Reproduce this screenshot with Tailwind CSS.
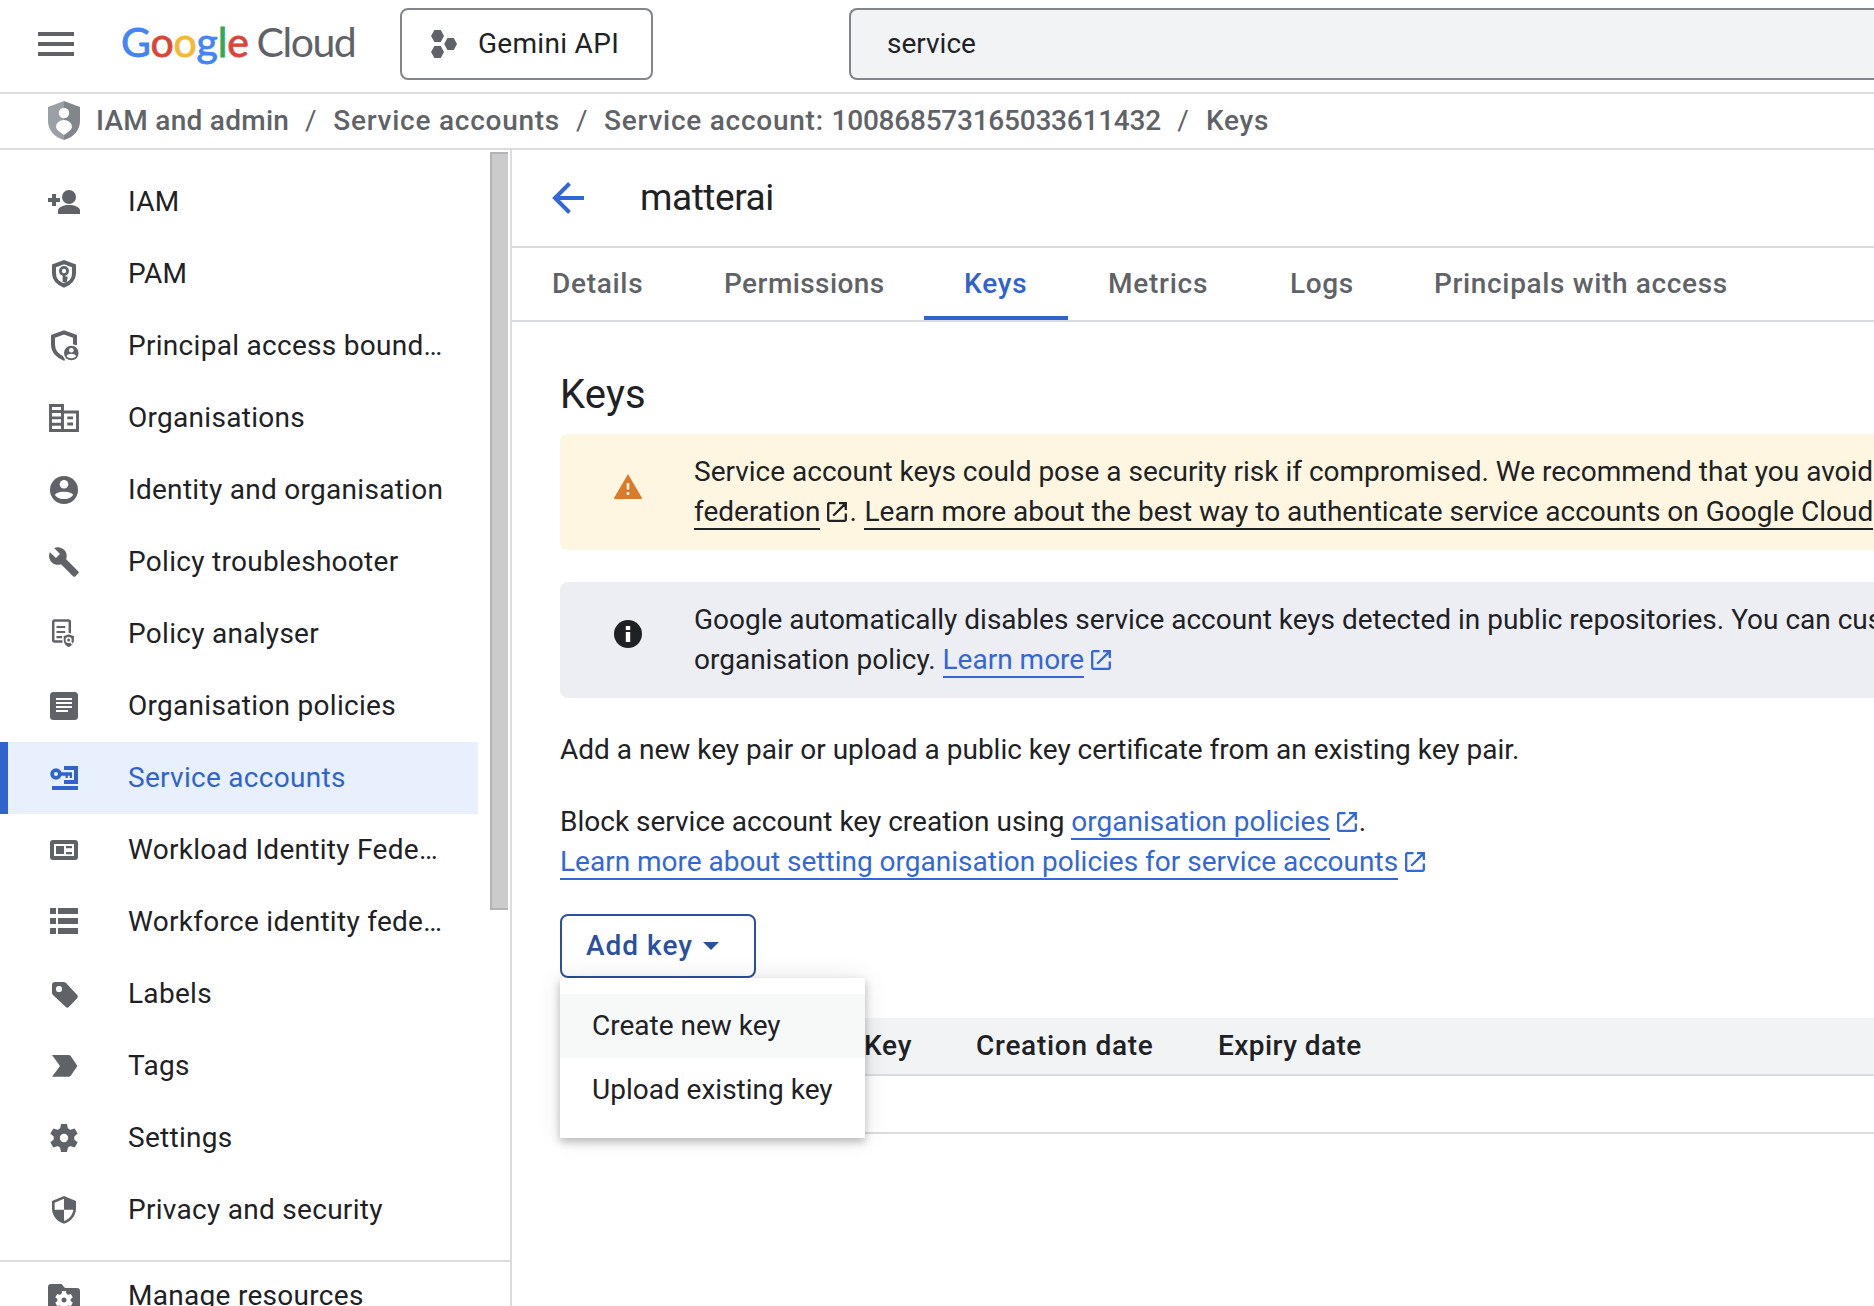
<!DOCTYPE html>
<html lang="en-GB">
<head>
<meta charset="utf-8">
<title>Keys – Service accounts – Google Cloud</title>
<script src="https://cdn.jsdelivr.net/npm/@tailwindcss/browser@4"></script>
</head>
<body class="w-[1874px] h-[1306px] overflow-hidden bg-white font-['Roboto',sans-serif] text-[28px] leading-10 text-[#202124]">
<svg class="hidden">
  <symbol id="ext" viewBox="0 0 20 20"><path d="M8.5 1.2H2.2a1 1 0 0 0-1 1v15.6a1 1 0 0 0 1 1h15.6a1 1 0 0 0 1-1V11.5M12 1.2h6.8V8M18.4 1.6L6.2 13.8" fill="none" stroke="currentColor" stroke-width="2.3"/></symbol>
</svg>
<div class="flex h-full flex-col">
  <header class="flex h-[94px] shrink-0 border-b-2 border-[#dadce0] pt-2">
    <button class="ml-[38px] mt-6 flex h-6 w-9 flex-col justify-between">
      <span class="h-1 w-full bg-[#5f6368]"></span><span class="h-1 w-full bg-[#5f6368]"></span><span class="h-1 w-full bg-[#5f6368]"></span>
    </button>
    <div class="ml-[47px] mt-[7px] flex h-[54px] w-[279px] items-center gap-2 whitespace-nowrap text-[41px] leading-[54px] font-['Lato',sans-serif]">
      <span class="tracking-[-0.2px] [-webkit-text-stroke:0.8px]"><span class="text-[#4285f4]">G</span><span class="text-[#db4437]">o</span><span class="text-[#f4b932]">o</span><span class="text-[#4285f4]">g</span><span class="text-[#34a853]">l</span><span class="text-[#db4437]">e</span></span>
      <span class="tracking-[-1.5px] text-[#5f6368]">Cloud</span>
    </div>
    <button class="flex h-[72px] w-[253px] items-center rounded-lg border-2 border-[#80868b] pl-[29px]">
      <svg class="h-7 w-[26px]" viewBox="0 0 26 28" fill="#5f6368"><path d="M3.4 0h6.4l3.2 6-3.2 6H3.4L0 6zM3.4 16h6.4l3.2 6-3.2 6H3.4L0 22zM16.4 8h6.4l3.2 6-3.2 6h-6.4L13.200 14z"/></svg>
      <span class="ml-[21px] tracking-[0.3px]">Gemini API</span>
    </button>
    <div class="ml-[196px] flex h-[72px] flex-1 items-center rounded-l-lg border-2 border-r-0 border-[#80868b] bg-[#f1f3f4] pl-9">service</div>
  </header>

  <nav class="flex h-14 shrink-0 items-center border-b-2 border-[#dadce0] pl-12 font-medium tracking-[0.75px] whitespace-nowrap text-[#5f6368]">
    <svg class="mb-px h-[39px] w-8" viewBox="0 0 32 39"><path d="M16 0L0 6v14c0 9 6.500 16.500 16 19z" fill="#9aa0a6"/><path d="M16 0l16 6v14c0 9-6.500 16.500-16 19z" fill="#80868b"/><circle cx="16" cy="12" r="5.200" fill="#fff"/><path d="M16 34c-2-2-8-4.500-8-8.500a8 6.500 0 0 1 16 0c0 4-6 6.500-8 8.500z" fill="#fff"/></svg>
    <span class="ml-4 tracking-[0.28px]">IAM and admin</span>
    <span class="w-11 text-center font-normal">/</span>
    <span>Service accounts</span>
    <span class="w-11 text-center font-normal">/</span>
    <span>Service account: <span class="tracking-[-0.23px]">100868573165033611432</span></span>
    <span class="w-[45px] text-center font-normal">/</span>
    <span>Keys</span>
  </nav>

  <div class="flex min-h-0 flex-1">
    <aside class="relative w-[512px] shrink-0 overflow-hidden border-r-2 border-[#dadce0] pt-4 tracking-[0.29px] text-[#5f6368]">
      <div class="absolute left-[490px] top-[2px] h-[758px] w-[18px] border-y-2 border-l-2 border-[#b3b3b3] bg-[#cbcbcb]"></div>
      <ul class="w-[478px] whitespace-nowrap">
        <li class="flex h-[72px] items-center pl-[46px]">
          <svg class="size-9" viewBox="0 0 36 36" fill="currentColor"><path d="M6 10h4v4h4v4h-4v4H6v-4H2v-4h4z"/><circle cx="23" cy="13" r="7"/><path d="M12 30v-3.500c0-3.500 6-5.500 11-5.500s11 2 11 5.500V30z"/></svg>
          <span class="ml-[46px] text-[#202124]">IAM</span></li>
        <li class="flex h-[72px] items-center pl-[46px]">
          <svg class="size-9" viewBox="0 0 36 36" fill="none" stroke="currentColor"><path d="M18 6.200L8 9.800v7.700c0 5.500 4 10 10 12 6-2 10-6.500 10-12V9.800z" stroke-width="4"/><circle cx="18" cy="15" r="3.600" stroke-width="2.800"/><path d="M18 18v8M18 22h3.500M18 25h3" stroke-width="2.800"/></svg>
          <span class="ml-[46px] text-[#202124]">PAM</span></li>
        <li class="flex h-[72px] items-center pl-[46px]">
          <svg class="size-9" viewBox="0 0 36 36"><path d="M29 17V8.400L18 4.300 7 8.400v8.100c0 6.500 4.500 12 12 14.500" fill="none" stroke="currentColor" stroke-width="4"/><circle cx="25.300" cy="25" r="9" fill="#fff"/><circle cx="25.300" cy="25" r="7.300" fill="currentColor"/><circle cx="25.300" cy="22.300" r="2.300" fill="#fff"/><path d="M20.600 28.200c0-3.400 9.400-3.400 9.400 0-2.400 2.700-7 2.700-9.400 0z" fill="#fff"/></svg>
          <span class="ml-[46px] text-[#202124]">Principal access bound…</span></li>
        <li class="flex h-[72px] items-center pl-[46px]">
          <svg class="size-9" viewBox="0 0 36 36" fill="none" stroke="currentColor"><path d="M4.500 5.500h12v25h-12zM16.500 12h15v18.500h-15" stroke-width="2.900"/><path d="M4 11.500h12.500M4 17.900h12.500M4 24.200h12.500M21.300 17.900h5.700M21.300 24h5.700" stroke-width="2.900"/></svg>
          <span class="ml-[46px] text-[#202124]">Organisations</span></li>
        <li class="flex h-[72px] items-center pl-[46px]">
          <svg class="size-9" viewBox="0 0 36 36" fill="currentColor"><circle cx="18" cy="18" r="14"/><circle cx="18" cy="12.300" r="4.300" fill="#fff"/><path d="M9 23.200c0-4.700 18-4.700 18 0-4.500 5.200-13.500 5.200-18 0z" fill="#fff"/></svg>
          <span class="ml-[46px] text-[#202124]">Identity and organisation</span></li>
        <li class="flex h-[72px] items-center pl-[46px]">
          <svg class="size-9" viewBox="0 0 36 36" fill="currentColor"><path transform="translate(1.800 1.800) scale(1.350)" d="M22.700 19l-9.100-9.100c.9-2.300.4-5-1.500-6.900-2-2-5-2.400-7.400-1.300L9 6 6 9 1.600 4.700C.4 7.100.9 10.100 2.900 12.100c1.900 1.900 4.600 2.400 6.900 1.500l9.100 9.100c.4.400 1 .4 1.400 0l2.300-2.300c.5-.4.5-1.100.1-1.400z"/></svg>
          <span class="ml-[46px] text-[#202124]">Policy troubleshooter</span></li>
        <li class="flex h-[72px] items-center pl-[46px]">
          <svg class="size-9" viewBox="0 0 36 36" fill="none" stroke="currentColor"><rect x="7.200" y="4.500" width="16.600" height="21" rx="1.500" stroke-width="2.500"/><path d="M10.500 11h8.700M10.500 16h8.700M10.500 21.200h6" stroke-width="2.200"/><path d="M22.800 17.500l-5.800 2v4.500c0 4 2.500 6.500 5.800 8 3.300-1.500 5.800-4 5.800-8v-4.500z" fill="currentColor" stroke="#fff" stroke-width="1.400"/><circle cx="22.600" cy="24" r="2.300" stroke="#fff" stroke-width="1.600"/><path d="M24 25.500l2.500 2.700" stroke="#fff" stroke-width="1.500"/></svg>
          <span class="ml-[46px] text-[#202124]">Policy analyser</span></li>
        <li class="flex h-[72px] items-center pl-[46px]">
          <svg class="size-9" viewBox="0 0 36 36"><rect x="4" y="4" width="28" height="28" rx="3.500" fill="currentColor"/><path d="M10 11h16M10 15h16M10 19h16M10 23h12" stroke="#fff" stroke-width="2"/></svg>
          <span class="ml-[46px] text-[#202124]">Organisation policies</span></li>
        <li class="flex h-[72px] items-center border-l-8 border-[#3064cc] bg-[#e8f0fe] pl-[38px] text-[#3064cc]">
          <svg class="size-9" viewBox="0 0 36 36" fill="currentColor"><path d="M18 6h14v18H18v-4h10V10H18zM6 26h26v4H6z"/><circle cx="10" cy="14" r="3.900" fill="none" stroke="currentColor" stroke-width="3.700"/><path d="M14.500 12.300H26V18h-2.300v-2.200h-1.900V18h-2.300v-2.200h-5z"/></svg>
          <span class="ml-[46px]">Service accounts</span></li>
        <li class="flex h-[72px] items-center pl-[46px]">
          <svg class="size-9" viewBox="0 0 36 36" fill="currentColor"><path fill-rule="evenodd" d="M7 8h22a3 3 0 0 1 3 3v14a3 3 0 0 1-3 3H7a3 3 0 0 1-3-3V11a3 3 0 0 1 3-3zm1 4v12h20V12zm2 2h8v8h-8zm10 0h6v2.200h-6zm0 6h6v2.200h-6z"/></svg>
          <span class="ml-[46px] text-[#202124]">Workload Identity Fede…</span></li>
        <li class="flex h-[72px] items-center pl-[46px]">
          <svg class="size-9" viewBox="0 0 36 36" fill="currentColor"><path d="M4 4h6v6H4zM12 4h20v6H12zM4 14h6v6H4zM12 14h20v6H12zM4 24h6v6H4zM12 24h20v6H12z"/></svg>
          <span class="ml-[46px] text-[#202124]">Workforce identity fede…</span></li>
        <li class="flex h-[72px] items-center pl-[46px]">
          <svg class="size-9" viewBox="0 0 36 36" fill="currentColor"><path fill-rule="evenodd" d="M9 6h8.500q1.500 0 2.600 1L31.200 19q1.400 1.600 0 3.200L22.800 31q-1.500 1.400-3 0L7 19q-1-1-1-2.500V9a3 3 0 0 1 3-3zm4 3.900a3.100 3.100 0 1 0 0 6.200 3.100 3.100 0 0 0 0-6.200z"/></svg>
          <span class="ml-[46px] text-[#202124]">Labels</span></li>
        <li class="flex h-[72px] items-center pl-[46px]">
          <svg class="size-9" viewBox="0 0 36 36" fill="currentColor"><path d="M6 7h16.500q1.500 0 2.400 1.200L31.400 18l-6.500 9.600q-.9 1.200-2.400 1.200H6L14 18z"/></svg>
          <span class="ml-[46px] text-[#202124]">Tags</span></li>
        <li class="flex h-[72px] items-center pl-[46px]">
          <svg class="size-9" viewBox="0 0 36 36" fill="currentColor"><g id="gear"><circle cx="18" cy="18" r="10.400"/><path id="teeth" d="M15 4h6l1.200 6v16L21 32h-6l-1.200-6V10z"/><use href="#teeth" transform="rotate(60 18 18)"/><use href="#teeth" transform="rotate(120 18 18)"/></g><circle cx="18" cy="18" r="4.200" fill="#fff"/></svg>
          <span class="ml-[46px] text-[#202124]">Settings</span></li>
        <li class="flex h-[72px] items-center pl-[46px]">
          <svg class="size-9" viewBox="0 0 36 36" fill="currentColor"><path transform="translate(2 2.700) scale(1.333 1.260)" d="M12 1L3 5v6c0 5.550 3.840 10.740 9 12 5.160-1.260 9-6.450 9-12V5l-9-4zm0 10.990h7c-.53 4.120-3.280 7.790-7 8.940V12H5V6.300l7-3.110v8.800z"/></svg>
          <span class="ml-[46px] text-[#202124]">Privacy and security</span></li>
      </ul>
      <div class="mt-[14px] flex h-[70px] items-center border-t-2 border-[#dadce0] pl-[46px] whitespace-nowrap">
        <svg class="size-9" viewBox="0 0 36 36" fill="currentColor"><path d="M5 6h10.500l3.500 4h12a3 3 0 0 1 3 3v18a3 3 0 0 1-3 3H5a3 3 0 0 1-3-3V9a3 3 0 0 1 3-3z"/><use href="#gear" fill="#fff" transform="translate(6.500 10.500) scale(.64)"/><circle cx="18" cy="22" r="2.500"/></svg>
        <span class="ml-[46px] text-[#202124]">Manage resources</span>
      </div>
    </aside>

    <main class="min-w-0 flex-1 whitespace-nowrap">
      <div class="flex h-[98px] items-center border-b-2 border-[#dadce0] pl-10">
        <svg class="h-8 w-8" viewBox="0 0 32 32" fill="none" stroke="#3367d6" stroke-width="4"><path d="M32 16H3.500M17.500 1.500L3 16l14.500 14.500"/></svg>
        <h1 class="ml-14 text-[37px] tracking-[-0.45px]">matterai</h1>
      </div>
      <div class="flex h-[74px] border-b-2 border-[#dadce0] font-medium text-[#5f6368]">
        <div class="flex w-[172px] items-center pl-10 tracking-[0.7px]">Details</div>
        <div class="flex w-[240px] items-center pl-10 tracking-[0.43px]">Permissions</div>
        <div class="flex w-[144px] items-center border-b-4 border-[#3064cc] pt-1 pl-10 tracking-[0.8px] text-[#3064cc]">Keys</div>
        <div class="flex w-[182px] items-center pl-10 tracking-[0.75px]">Metrics</div>
        <div class="flex w-[144px] items-center pl-10 tracking-[0.6px]">Logs</div>
        <div class="flex items-center pl-10 tracking-[0.65px]">Principals with access</div>
      </div>
      <section class="pl-12">
        <h2 class="flex h-28 items-center pt-[34px] text-[40px] tracking-[0.2px]">Keys</h2>
        <div class="flex h-[116px] overflow-hidden rounded-l-lg bg-[#fef6e0] pt-[18px]">
          <svg class="mt-[22px] ml-[54px] h-[25px] w-7 shrink-0" viewBox="0 0 28 25"><path d="M14 0L28 24a1 1 0 0 1-1 1H1a1 1 0 0 1-1-1z" fill="#d97b2b"/><path d="M12.700 9h2.600v6.500h-2.600zM12.700 18h2.600v3h-2.600z" fill="#fef6e0"/></svg>
          <div class="ml-[52px]">
            <p>Service account keys could pose a security risk if compromised. We recommend that you avoid</p>
            <p class="flex"><span class="h-[38px] border-b-2 border-[#202124]">federation</span><svg class="mt-[10px] ml-[7px] size-5"><use href="#ext"/></svg><span class="w-[17px] pl-0.5">.</span><span class="h-[38px] border-b-2 border-[#202124]">Learn more about the best way to authenticate service accounts on Google Cloud</span></p>
          </div>
        </div>
        <div class="mt-8 flex h-[116px] overflow-hidden rounded-l-lg bg-[#edeef3] pt-[18px]">
          <svg class="mt-5 ml-[54px] size-7 shrink-0" viewBox="0 0 28 28"><circle cx="14" cy="14" r="14" fill="#202124"/><path d="M11.800 6h4.400v4h-4.400zM11.800 12h4.400v10h-4.400z" fill="#fff"/></svg>
          <div class="ml-[52px]">
            <p>Google automatically disables service account keys detected in public repositories. You can customise</p>
            <p class="flex"><span>organisation policy.&nbsp;</span><span class="h-[38px] border-b-2 border-[#3367d6] text-[#3367d6]">Learn more</span><svg class="mt-[10px] ml-[7px] size-5 text-[#3367d6]"><use href="#ext"/></svg></p>
          </div>
        </div>
        <p class="mt-8">Add a new key pair or upload a public key certificate from an existing key pair.</p>
        <p class="mt-8 flex"><span>Block service account key creation using&nbsp;</span><span class="h-[38px] border-b-2 border-[#3367d6] text-[#3367d6]">organisation policies</span><svg class="mt-[10px] ml-[7px] size-5 text-[#3367d6]"><use href="#ext"/></svg><span class="pl-0.5">.</span></p>
        <p class="flex h-10 text-[#3367d6]"><span class="h-[38px] border-b-2 border-[#3367d6]">Learn more about setting organisation policies for service accounts</span><svg class="mt-[10px] ml-[7px] size-5"><use href="#ext"/></svg></p>
        <div class="relative mt-8 w-[196px]">
          <button class="flex h-16 w-full items-center rounded-lg border-2 border-[#2a50a2] pl-6 font-medium text-[#2a50a2]"><span class="tracking-[1px]">Add key</span><svg class="ml-[10px] h-2 w-4" viewBox="0 0 16 8" fill="currentColor"><path d="M0 0h16L8 8z"/></svg></button>
          <div class="absolute top-16 left-0 z-10 h-40 w-[305px] bg-white pt-4 shadow-[0_4px_8px_rgba(0,0,0,0.24),0_0_24px_rgba(0,0,0,0.1)]">
            <div class="flex h-16 items-center bg-[#f7f8f8] pl-8">Create new key</div>
            <div class="flex h-16 items-center pl-8">Upload existing key</div>
          </div>
        </div>
        <div class="mt-10 flex h-[58px] items-center border-b-2 border-[#dadce0] bg-[#f1f3f4] font-medium">
          <span class="ml-[304px] w-[112px] tracking-[0.75px]">Key</span><span class="w-[242px] tracking-[0.73px]">Creation date</span><span class="tracking-[0.45px]">Expiry date</span>
        </div>
        <div class="h-[58px] border-b-2 border-[#dadce0]"></div>
      </section>
    </main>
  </div>
</div>
</body>
</html>
